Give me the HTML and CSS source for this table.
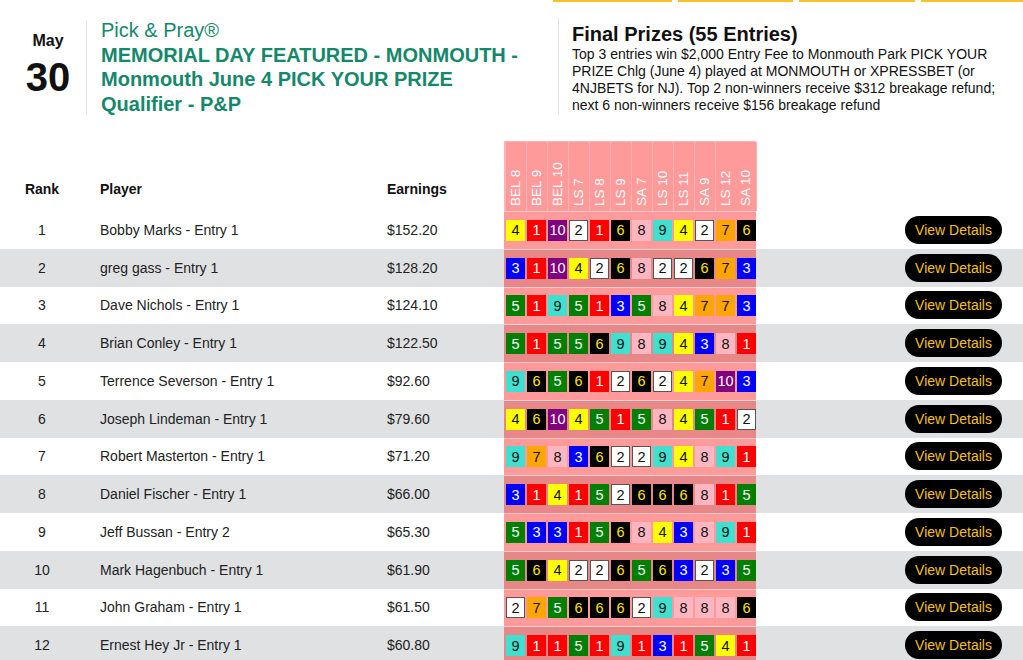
FILE: index.html
```html
<!DOCTYPE html>
<html>
<head>
<meta charset="utf-8">
<link rel="stylesheet" href="styles.css">
</head>
<body>
<div class="tabs">
  <span class="tab tab-a"></span>
  <span class="tab tab-b"></span>
  <span class="tab tab-c"></span>
  <span class="tab tab-d"></span>
</div>

<div class="event">
  <div class="date">
    <div class="month">May</div>
    <div class="day">30</div>
  </div>
  <div class="title">
    <div class="brand">Pick &amp; Pray®</div>
    <div class="name">MEMORIAL DAY FEATURED - MONMOUTH - Monmouth June 4 PICK YOUR PRIZE Qualifier - P&amp;P</div>
  </div>
  <div class="prizes">
    <div class="prizes-title">Final Prizes (55 Entries)</div>
    <div class="prizes-text">Top 3 entries win $2,000 Entry Fee to Monmouth Park PICK YOUR PRIZE Chlg (June 4) played at MONMOUTH or XPRESSBET (or 4NJBETS for NJ). Top 2 non-winners receive $312 breakage refund; next 6 non-winners receive $156 breakage refund</div>
  </div>
</div>

<div class="board" id="board">
  <div class="row head">
    <div class="c-rank">Rank</div>
    <div class="c-player">Player</div>
    <div class="c-earn">Earnings</div>
    <div class="c-picks races">
      <span class="race">BEL 8</span><span class="race">BEL 9</span><span class="race">BEL 10</span><span class="race">LS 7</span><span class="race">LS 8</span><span class="race">LS 9</span><span class="race">SA 7</span><span class="race">LS 10</span><span class="race">LS 11</span><span class="race">SA 9</span><span class="race">LS 12</span><span class="race">SA 10</span>
    </div>
    <div class="c-action"></div>
  </div>
</div>

<script src="app.js"></script>
</body>
</html>
```

FILE: app.js
```js
const rows = [
  [1, "Bobby Marks - Entry 1", "$152.20", [4,1,10,2,1,6,8,9,4,2,7,6]],
  [2, "greg gass - Entry 1", "$128.20", [3,1,10,4,2,6,8,2,2,6,7,3]],
  [3, "Dave Nichols - Entry 1", "$124.10", [5,1,9,5,1,3,5,8,4,7,7,3]],
  [4, "Brian Conley - Entry 1", "$122.50", [5,1,5,5,6,9,8,9,4,3,8,1]],
  [5, "Terrence Severson - Entry 1", "$92.60", [9,6,5,6,1,2,6,2,4,7,10,3]],
  [6, "Joseph Lindeman - Entry 1", "$79.60", [4,6,10,4,5,1,5,8,4,5,1,2]],
  [7, "Robert Masterton - Entry 1", "$71.20", [9,7,8,3,6,2,2,9,4,8,9,1]],
  [8, "Daniel Fischer - Entry 1", "$66.00", [3,1,4,1,5,2,6,6,6,8,1,5]],
  [9, "Jeff Bussan - Entry 2", "$65.30", [5,3,3,1,5,6,8,4,3,8,9,1]],
  [10, "Mark Hagenbuch - Entry 1", "$61.90", [5,6,4,2,2,6,5,6,3,2,3,5]],
  [11, "John Graham - Entry 1", "$61.50", [2,7,5,6,6,6,2,9,8,8,8,6]],
  [12, "Ernest Hey Jr - Entry 1", "$60.80", [9,1,1,5,1,9,1,3,1,5,4,1]]
];
const board = document.getElementById("board");
rows.forEach(([rank, name, earn, picks]) => {
  const r = document.createElement("div");
  r.className = "row entry" + (rank % 2 === 0 ? " alt" : "");
  const boxes = picks.map(p => `<span class="pick p${p}">${p}</span>`).join("");
  r.innerHTML = `<div class="c-rank">${rank}</div><div class="c-player">${name}</div><div class="c-earn">${earn}</div><div class="c-picks">${boxes}</div><div class="c-action"><button class="details">View Details</button></div>`;
  board.appendChild(r);
});
```

FILE: styles.css
```css
html, body {
  margin: 0;
  padding: 0;
  overflow: hidden;
  background: #fff;
}
body {
  font-family: "Liberation Sans", Arial, sans-serif;
  color: #222;
}

.tabs {
  display: flex;
  height: 2px;
  padding-left: 553px;
  gap: 6px;
}
.tab {
  display: block;
  height: 2px;
  background: #f8c22c;
}
.tab-a { width: 119px; }
.tab-b { width: 115px; }
.tab-c { width: 116px; }
.tab-d { flex: 1; }

.event {
  display: flex;
  margin-top: 18px;
  height: 95px;
}
.date {
  width: 76px;
  padding-left: 10px;
  border-right: 1px solid #e4e4e4;
  display: flex;
  flex-direction: column;
  align-items: center;
  color: #111;
  font-weight: bold;
  box-sizing: content-box;
}
.month {
  font-size: 16px;
  line-height: 18px;
  margin-top: 12px;
}
.day {
  font-size: 40px;
  line-height: 44px;
  margin-top: 5px;
}
.title {
  width: 430px;
  padding: 0 27px 0 14px;
  border-right: 1px solid #e4e4e4;
  color: #15876b;
  font-size: 20px;
  line-height: 24.5px;
  margin-top: -2px;
}
.brand { font-weight: normal; }
.name { font-weight: bold; }
.prizes {
  flex: 1;
  padding: 3px 8px 0 13px;
  color: #111;
}
.prizes-title {
  font-size: 20px;
  font-weight: bold;
  line-height: 22px;
}
.prizes-text {
  font-size: 14px;
  line-height: 17px;
  margin-top: 1px;
}

.board {
  margin-top: 26px;
}
.row {
  display: grid;
  grid-template-columns: 84px 303px 117px 252px 1fr;
  align-items: center;
}
.head {
  height: 70px;
  align-items: end;
  font-weight: bold;
  font-size: 14px;
  color: #111;
}
.head > div:not(.races) {
  padding-bottom: 14px;
}
.c-rank { text-align: center; font-size: 14px; }
.c-player { padding-left: 16px; font-size: 14px; }
.c-earn { font-size: 14px; }

.races {
  display: flex;
  height: 70px;
  background: #fe9a9a;
  box-sizing: border-box;
  border-top: 1px solid #ffb3b3;
  border-left: 1px solid #ffb3b3;
}
.race {
  width: 21px;
  box-sizing: border-box;
  border-right: 1px solid #ffb0b0;
  writing-mode: vertical-rl;
  transform: rotate(180deg);
  color: #fff;
  font-weight: normal;
  font-size: 13.5px;
  line-height: 20px;
  padding-top: 5px;
  white-space: nowrap;
}
.race:last-child { border-right: none; border-left: 1px solid #ffb0b0; }

.entry {
  height: 37.75px;
  font-size: 14px;
}
.entry.alt { background: #e0e1e3; }
.entry .c-picks {
  height: 100%;
  box-sizing: border-box;
  display: flex;
  align-items: center;
  gap: 2px;
  padding-left: 2px;
  background: #fe9a9a;
  border-top: 1px solid #ffc8c8;
}
.entry.alt .c-picks {
  background: #e88787;
  border-top: 1px solid #f4d4d4;
}
.pick {
  width: 19px;
  height: 21px;
  box-sizing: border-box;
  display: flex;
  align-items: center;
  justify-content: center;
  font-size: 14.5px;
  border: 1px solid transparent;
}
.p1 { background: #ff0000; color: #fff; border-color: #f00; }
.p2 { background: #fff; color: #111; border-color: #555; }
.p3 { background: #0000ff; color: #fff; border-color: #00f; }
.p4 { background: #ffff00; color: #111; border-color: #ff0; }
.p5 { background: #008000; color: #fff; border-color: #008000; }
.p6 { background: #000; color: #ffe400; border-color: #000; }
.p7 { background: #ffa500; color: #111; border-color: #ffa500; }
.p8 { background: #ffb6c1; color: #111; border-color: #ffb6c1; }
.p9 { background: #40e0d0; color: #111; border-color: #40e0d0; }
.p10 { background: #800080; color: #fff; border-color: #800080; }

.c-action {
  display: flex;
  justify-content: flex-end;
  padding-right: 21px;
}
.details {
  width: 97px;
  height: 28px;
  border: none;
  border-radius: 14px;
  background: #000;
  color: #f3c11f;
  font-family: "Liberation Sans", Arial, sans-serif;
  font-size: 14px;
  padding: 0;
  cursor: pointer;
}
```
